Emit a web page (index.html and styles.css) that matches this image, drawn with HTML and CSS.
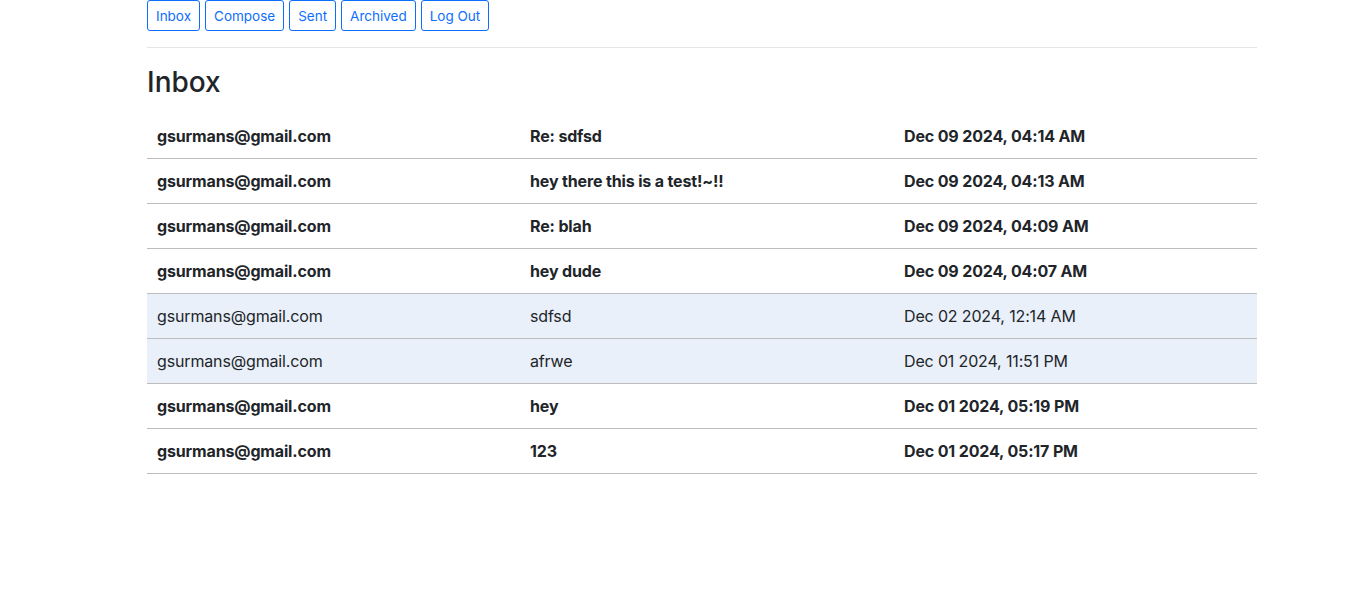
FILE: index.html
```html
<!DOCTYPE html>
<html lang="en">
<head>
<meta charset="utf-8">
<title>Inbox</title>
<link rel="stylesheet" href="styles.css">
</head>
<body>
<div class="container">
  <nav class="nav">
    <button class="btn">Inbox</button>
    <button class="btn">Compose</button>
    <button class="btn">Sent</button>
    <button class="btn">Archived</button>
    <button class="btn">Log Out</button>
  </nav>
  <hr class="divider">
  <h3 class="title">Inbox</h3>
  <table class="mail">
    <colgroup><col class="c1"><col class="c2"><col class="c3"></colgroup>
    <tbody>
      <tr class="unread"><td>gsurmans@gmail.com</td><td>Re: sdfsd</td><td>Dec 09 2024, 04:14 AM</td></tr>
      <tr class="unread"><td>gsurmans@gmail.com</td><td>hey there this is a test!~!!</td><td>Dec 09 2024, 04:13 AM</td></tr>
      <tr class="unread"><td>gsurmans@gmail.com</td><td>Re: blah</td><td>Dec 09 2024, 04:09 AM</td></tr>
      <tr class="unread"><td>gsurmans@gmail.com</td><td>hey dude</td><td>Dec 09 2024, 04:07 AM</td></tr>
      <tr class="read"><td>gsurmans@gmail.com</td><td>sdfsd</td><td>Dec 02 2024, 12:14 AM</td></tr>
      <tr class="read"><td>gsurmans@gmail.com</td><td>afrwe</td><td>Dec 01 2024, 11:51 PM</td></tr>
      <tr class="unread"><td>gsurmans@gmail.com</td><td>hey</td><td>Dec 01 2024, 05:19 PM</td></tr>
      <tr class="unread"><td>gsurmans@gmail.com</td><td>123</td><td>Dec 01 2024, 05:17 PM</td></tr>
    </tbody>
  </table>
</div>
</body>
</html>
```

FILE: styles.css
```css
* { box-sizing: border-box; }
html, body { margin: 0; padding: 0; background: #fff; }
body {
  font-family: Inter, "Noto Sans", "Liberation Sans", sans-serif;
  font-size: 16px;
  line-height: 1.5;
  color: #212529;
}
.container {
  width: 1110px;
  margin: 0 0 0 147px;
}
.nav {
  display: flex;
  gap: 5px;
}
.btn {
  font-family: inherit;
  font-size: 13.5px;
  line-height: 21px;
  padding: 5px 8px 3px;
  color: #0d6efd;
  background: #fff;
  border: 1px solid #0d6efd;
  border-radius: 3px;
  cursor: pointer;
}
.divider {
  margin: 16px 0 18px;
  border: 0;
  border-top: 1px solid rgba(0,0,0,0.1);
}
.title {
  margin: 0 0 8px;
  font-size: 28px;
  font-weight: 500;
  line-height: 1.2;
}
.mail {
  width: 100%;
  border-collapse: collapse;
  margin-top: 14px;
  letter-spacing: -0.15px;
}
.c1 { width: 373px; }
.c2 { width: 374px; }
.c3 { width: 363px; }
.mail td {
  padding: 10px 10px;
  line-height: 24px;
  border-bottom: 1px solid #bcbcbc;
}
.unread td { font-weight: 700; }
.read td { background: #e9f0fa; font-weight: 400; }
```
